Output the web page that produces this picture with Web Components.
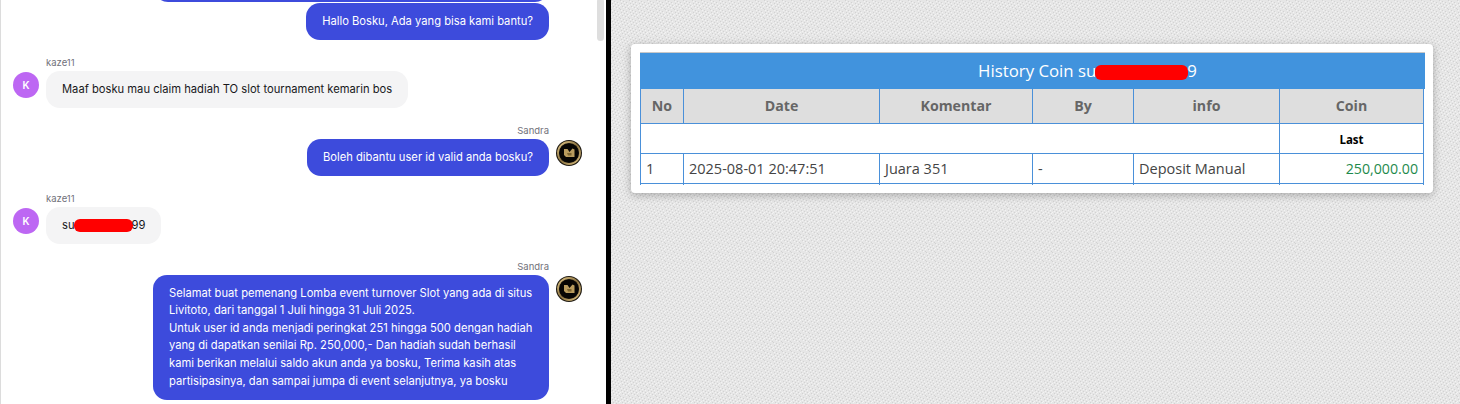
<!DOCTYPE html>
<html><head><meta charset="utf-8">
<style>
html,body{margin:0;padding:0;height:404px;overflow:hidden;background:#fff}
body{font-family:Inter,"Liberation Sans",sans-serif}
</style></head>
<body>
<split-view>
  <chat-panel slot="left">
    <chat-msg side="out" class="first"><span>&nbsp;</span></chat-msg>
    <chat-msg side="out" gap="1">Hallo Bosku, Ada yang bisa kami bantu?</chat-msg>
    <chat-msg side="in" name="kaze11">Maaf bosku mau claim hadiah TO slot tournament kemarin bos</chat-msg>
    <chat-msg side="out" name="Sandra" avatar>Boleh dibantu user id valid anda bosku?</chat-msg>
    <chat-msg side="in" name="kaze11">su<redact-blob style="--w:59px;--h:13px;--mx:-1px -1px -1px -1px"></redact-blob>99</chat-msg>
    <chat-msg side="out" name="Sandra" avatar wide>Selamat buat pemenang Lomba event turnover Slot yang ada di situs Livitoto, dari tanggal 1 Juli hingga 31 Juli 2025.<br>Untuk user id anda menjadi peringkat 251 hingga 500 dengan hadiah yang di dapatkan senilai Rp. 250,000,- Dan hadiah sudah berhasil kami berikan melalui saldo akun anda ya bosku, Terima kasih atas partisipasinya, dan sampai jumpa di event selanjutnya, ya bosku</chat-msg>
  </chat-panel>
  <history-card slot="right"></history-card>
</split-view>
<script>
function def(name, css, html, init){
  customElements.define(name, class extends HTMLElement{
    constructor(){super();const s=this.attachShadow({mode:'open'});s.innerHTML='<style>'+css+'</style>'+(typeof html==='function'?html(this):html);}
    connectedCallback(){ if(init) init(this); }
  });
}
const tile="data:image/svg+xml,"+encodeURIComponent(`<svg xmlns="http://www.w3.org/2000/svg" width="9" height="9" shape-rendering="crispEdges"><rect width="9" height="9" fill="#e6e6e6"/>
<g fill="#d2d2d2"><rect x="0" y="0" width="1" height="1"/><rect x="3" y="1" width="1" height="1"/><rect x="6" y="2" width="1" height="1"/><rect x="1" y="3" width="1" height="1"/><rect x="4" y="4" width="1" height="1"/><rect x="7" y="5" width="1" height="1"/><rect x="2" y="6" width="1" height="1"/><rect x="5" y="7" width="1" height="1"/><rect x="8" y="8" width="1" height="1"/></g>
<g fill="#f3f3f3"><rect x="1" y="1" width="1" height="1"/><rect x="4" y="2" width="1" height="1"/><rect x="7" y="3" width="1" height="1"/><rect x="2" y="4" width="1" height="1"/><rect x="5" y="5" width="1" height="1"/><rect x="8" y="6" width="1" height="1"/><rect x="3" y="7" width="1" height="1"/><rect x="6" y="8" width="1" height="1"/><rect x="0" y="5" width="1" height="1"/></g></svg>`);

def('split-view',`
:host{display:flex;width:1460px;height:404px;overflow:hidden}
.l{width:606px;flex:none;height:404px;overflow:hidden}
.d{width:5px;flex:none;background:#000}
.r{flex:1;min-width:0;height:404px;padding:44px 27px 0 20px;box-sizing:border-box;background:#e6e6e6 url("${tile}")}
`,`<div class="l"><slot name="left"></slot></div><div class="d"></div><div class="r"><slot name="right"></slot></div>`);

def('chat-panel',`
:host{display:block;position:relative;height:404px;box-sizing:border-box;background:#fff;border-left:1px solid #dcdcdc;overflow:hidden;padding:0 57px 0 12px}
.thumb{position:absolute;top:-2px;left:596px;width:7px;height:43px;border-radius:4px;background:#dedede;box-shadow:0 0 0 1px #fff}
`,`<slot></slot><div class="thumb"></div>`);

const logo=`<svg width="26" height="26" viewBox="0 0 26 26"><defs><linearGradient id="g" x1="0" y1="0" x2="1" y2="1"><stop offset="0" stop-color="#e3c888"/><stop offset=".5" stop-color="#8a7240"/><stop offset="1" stop-color="#dcc080"/></linearGradient></defs><circle cx="13" cy="13" r="13" fill="#1d1810"/><circle cx="13" cy="13" r="11" fill="none" stroke="url(#g)" stroke-width="1.8"/><circle cx="13" cy="13" r="9.6" fill="#070604"/><path d="M8 9 H11.5 L13.5 12 L16.5 8.5 L18.5 9.5 V17 H10 L8 15Z" fill="#b99c5e"/><path d="M11 13h4.5v2.5H12z" fill="#7c6531"/></svg>`;

def('chat-msg',`
:host{display:block;margin-top:16px}
:host(.first){margin-top:-35px}
:host([gap]){margin-top:1px}
.name{font-size:9.5px;line-height:12px;color:#71717a;padding:1px 0 2px 33px}
.row{display:flex;align-items:flex-start;gap:7px}
.av{flex:none;width:26px;height:26px;border-radius:50%;margin-top:1px}
.k{background:#bd67f3;color:#fff;font-size:10px;font-weight:600;display:flex;align-items:center;justify-content:center;}
.b{font-size:11.2px;line-height:17.6px;padding:9.7px 16px;border-radius:14px;box-sizing:border-box;}
:host([side=in]) .b{background:#f4f4f5;color:#18181b}
:host([side=out]) .b{background:#3d4bdc;color:#fff}
:host([side=out]) .row{justify-content:flex-end;position:relative}
:host([side=out]) .name{text-align:right;padding:1px 0 2px 0;}
:host([wide]) .b{width:396px}
:host(.first) .b{width:395px}
svg{display:block}
.avx{position:absolute;left:calc(100% + 7px);top:1px}
`,(h)=>{
  const side=h.getAttribute('side'),name=h.getAttribute('name'),av=h.hasAttribute('avatar');
  const nm=name?`<div class="name">${name}</div>`:'';
  if(side==='in')return `${nm}<div class="row"><div class="av k">K</div><div class="b"><slot></slot></div></div>`;
  return `${nm}<div class="row"><div class="b"><slot></slot></div>${av?`<div class="avx">${logo}</div>`:''}</div>`;
});

def('redact-blob',`:host{display:inline-block;width:var(--w);height:var(--h);background:#f00;border-radius:6px;vertical-align:middle;margin:var(--mx,0)}`,``);

def('history-card',`
:host{display:block;width:802px;height:149px;box-sizing:border-box;padding:8px 9px 0 9px;background:#fff;border-radius:4px;box-shadow:0 2px 8px rgba(0,0,0,.28);font-family:"Open Sans","Noto Sans",sans-serif}
.t{height:36px;background:#4193dd;color:#fff;font-size:16.8px;line-height:36px;text-align:center;border-top:1px solid #c8c8c8;padding-left:110px;margin-right:-1px;white-space:nowrap}
.blob{display:inline-block;width:93px;height:15px;border-radius:6px;background:#f00;vertical-align:-3px;margin-left:-1px;margin-right:-1px}
table{border-collapse:collapse;table-layout:fixed;width:784px;font-size:14.5px;color:#444}
td,th{border:1px solid #4a90d9;padding:0;height:29px;box-sizing:border-box}
th{background:#dedede;color:#666;font-size:14.2px;font-weight:700;text-align:center;height:34px;border-top:0}
td{padding:0 5px;color:#444}
td.last{font-size:11.5px;font-weight:700;color:#000;text-align:center;padding-top:2px}
td.coin{text-align:right;color:#1e8a4c;font-size:14.2px}
tr.tail td{height:1px;padding:0;font-size:0;line-height:0;border-top:0;border-bottom:0}
`,`<div class="t">History Coin su<span class="blob"></span>9</div>
<table>
<colgroup><col style="width:43px"><col style="width:196px"><col style="width:153px"><col style="width:101px"><col style="width:146px"><col style="width:144px"></colgroup>
<tr><th>No</th><th>Date</th><th>Komentar</th><th>By</th><th>info</th><th>Coin</th></tr>
<tr style="height:30px"><td colspan="5"></td><td class="last">Last</td></tr>
<tr style="height:30px"><td>1</td><td>2025-08-01 20:47:51</td><td>Juara 351</td><td>-</td><td>Deposit Manual</td><td class="coin">250,000.00</td></tr>
<tr class="tail"><td></td><td></td><td></td><td></td><td></td><td></td></tr>
</table>`);
</script>
</body></html>
